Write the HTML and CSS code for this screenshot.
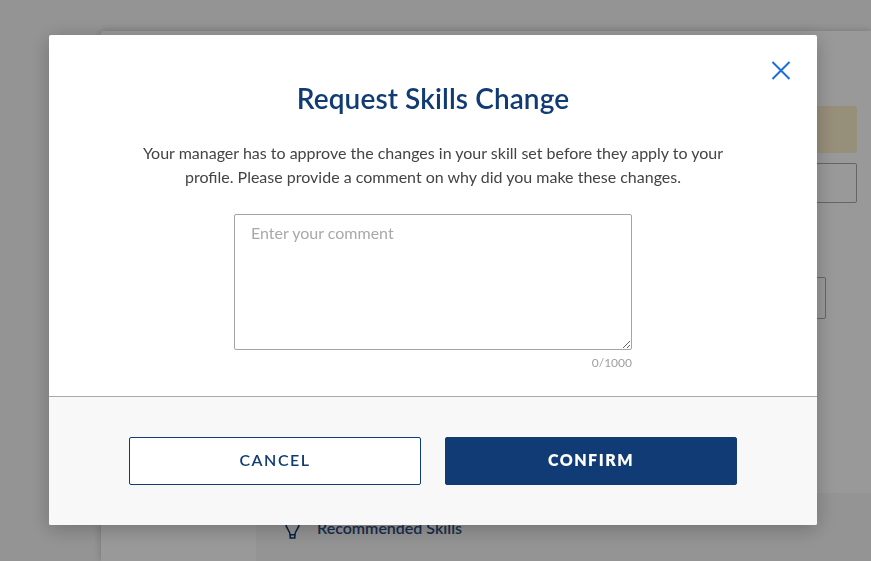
FILE: index.html
```html
<!DOCTYPE html>
<html lang="en">
<head>
    <meta charset="UTF-8">
    <meta name="viewport" content="width=device-width, initial-scale=1.0">
    <title>Request Skills Change</title>
    <link rel="stylesheet" href="styles.css">
</head>
<body>
    <div class="page">
        <div class="sidebar"></div>
        <div class="content">
            <div class="profile">
                <div class="notice"></div>
                <div class="search-field"></div>
                <div class="skill-field"></div>
            </div>
            <div class="recommended">
                <svg class="bulb" width="18" height="24" viewBox="0 0 18 24" fill="none" stroke="#113b74" stroke-width="1.6">
                    <path d="M6 18.500C6 14.500 1.800 12.500 1.800 7.800a6.700 6.700 0 0 1 13.400 0c0 4.700-4.200 6.700-4.200 10.700M5.200 18.800h6.600M6.200 18.500v3.500h4.600v-3.500"/>
                </svg>
                <span>Recommended Skills</span>
            </div>
        </div>
    </div>

    <div class="overlay">
        <div class="modal">
            <button class="close" aria-label="Close">
                <svg width="20" height="20" viewBox="0 0 20 20" fill="none" stroke="#1a6fdb" stroke-width="2">
                    <path d="M1.500 2l17 17M18.500 2l-17 17"/>
                </svg>
            </button>
            <div class="modal-body">
                <h1>Request Skills Change</h1>
                <p>
                    Your manager has to approve the changes in your skill set before they apply to your profile. Please provide a comment on why did you make these changes.
                </p>
                <div class="comment">
                    <textarea maxlength="1000" placeholder="Enter your comment"></textarea>
                    <div class="counter">0/1000</div>
                </div>
            </div>
            <div class="modal-footer">
                <button class="btn btn-secondary">Cancel</button>
                <button class="btn btn-primary">Confirm</button>
            </div>
        </div>
    </div>
</body>
</html>
```
FILE: styles.css
```css
* {
    box-sizing: border-box;
}
body {
    font-family: Lato, 'Liberation Sans', sans-serif;
    margin: 0;
    padding: 31px 0 0 101px;
    height: 100vh;
    overflow: hidden;
    background: #f7f7f7;
}
.page {
    display: flex;
    height: 100%;
    background: #fff;
    border-radius: 3px 0 0 0;
    box-shadow: 0 0 8px rgba(0, 0, 0, 0.2);
}
.sidebar {
    width: 155px;
}
.content {
    flex: 1;
    display: flex;
    flex-direction: column;
}
.profile {
    height: 462px;
    padding: 75px 14px 0 30px;
}
.notice {
    height: 47px;
    background: #fbeecb;
    border-radius: 3px;
}
.search-field {
    height: 40px;
    margin-top: 10px;
    border: 1px solid #a9a9a9;
    border-radius: 2px;
}
.skill-field {
    height: 42px;
    margin: 74px 31px 0 0;
    border: 1px solid #a9a9a9;
    border-radius: 2px;
}
.recommended {
    flex: 1;
    display: flex;
    align-items: flex-start;
    gap: 15px;
    padding: 23px 0 0 28px;
    background: #f7f7f7;
    color: #2a4d80;
    font-size: 16px;
    font-weight: 600;
    line-height: 24px;
}
.overlay {
    position: fixed;
    inset: 0;
    display: flex;
    align-items: flex-start;
    padding: 35px 54px 0 49px;
    background: rgba(0, 0, 0, 0.4);
}
.modal {
    position: relative;
    width: 768px;
    background: #fff;
    border-radius: 2px;
    box-shadow: 0 4px 20px rgba(0, 0, 0, 0.25);
    overflow: hidden;
}
.close {
    position: absolute;
    top: 25px;
    right: 26px;
    padding: 0;
    border: none;
    background: none;
    line-height: 0;
    cursor: pointer;
}
.modal-body {
    height: 361px;
    padding: 43px 80px 0;
    text-align: center;
}
h1 {
    margin: 0;
    color: #113b74;
    font-size: 28px;
    font-weight: 600;
    letter-spacing: 0.1px;
    line-height: 40px;
}
p {
    margin: 23px 0 0;
    color: #444;
    font-size: 16px;
    line-height: 24px;
}
.comment {
    width: 398px;
    margin: 25px auto 0;
}
textarea {
    display: block;
    width: 100%;
    height: 136px;
    padding: 6px 16px;
    border: 1px solid #a4a4a4;
    border-radius: 2px;
    font-family: inherit;
    font-size: 16px;
    line-height: 24px;
    resize: vertical;
}
textarea::placeholder {
    color: #a9a9a9;
}
.counter {
    margin-top: 4px;
    color: #a0a0a0;
    font-size: 12px;
    line-height: 18px;
    text-align: right;
}
.modal-footer {
    display: flex;
    gap: 24px;
    height: 129px;
    padding: 40px 80px;
    border-top: 1px solid #a9a9a9;
    background: #f8f8f8;
}
.btn {
    flex: 1;
    height: 48px;
    padding: 0 0 3px;
    border: 1px solid #113b74;
    border-radius: 2px;
    font-family: inherit;
    font-size: 16px;
    letter-spacing: 1.5px;
    text-transform: uppercase;
    cursor: pointer;
}
.btn-secondary {
    background: #fff;
    color: #113b74;
    font-weight: 600;
}
.btn-primary {
    background: #113b74;
    color: #fff;
    font-weight: 800;
}
```
